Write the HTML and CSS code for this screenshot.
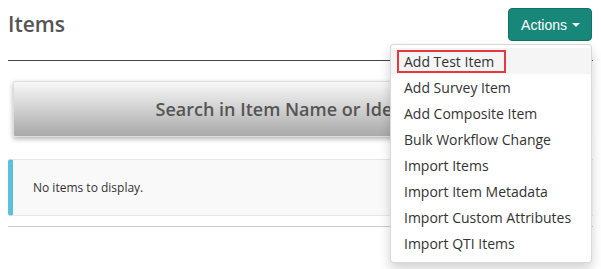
FILE: index.html
```html
<!DOCTYPE html>
<html lang="en">
<head>
    <meta charset="UTF-8">
    <title>Items</title>
    <link rel="stylesheet" href="styles.css">
</head>
<body>
    <div class="page">
        <div class="page-header">
            <h1>Items</h1>
            <div class="actions">
                <button class="actions-btn">Actions <span class="caret"></span></button>
                <ul class="dropdown">
                    <li class="active"><a href="#"><span class="marked">Add Test Item</span></a></li>
                    <li><a href="#">Add Survey Item</a></li>
                    <li><a href="#">Add Composite Item</a></li>
                    <li><a href="#">Bulk Workflow Change</a></li>
                    <li><a href="#">Import Items</a></li>
                    <li><a href="#">Import Item Metadata</a></li>
                    <li><a href="#">Import Custom Attributes</a></li>
                    <li><a href="#">Import QTI Items</a></li>
                </ul>
            </div>
        </div>
        <hr class="rule">
        <button class="search-btn">Search in Item Name or Identifier</button>
        <div class="info">No items to display.</div>
        <div class="footer-line"></div>
    </div>
</body>
</html>
```

FILE: styles.css
```css
html, body {
    height: 100%;
}
body {
    margin: 0;
    font-family: 'Open Sans', sans-serif;
    background: #fff;
    color: #333;
}
.page {
    min-height: 269px;
    padding: 8px 8px 0 8px;
    box-sizing: border-box;
}
.page-header {
    display: flex;
    justify-content: space-between;
    align-items: flex-start;
    margin-bottom: 19px;
}
h1 {
    margin: 0;
    font-size: 21px;
    font-weight: 600;
    line-height: 33px;
    color: #555;
}
.actions {
    position: relative;
    margin-right: 1px;
}
.actions-btn {
    display: flex;
    align-items: center;
    height: 33px;
    padding: 0 11px 0 12px;
    background: #17877a;
    border: 1px solid #137266;
    border-radius: 4px;
    color: #fff;
    font-family: 'Liberation Sans', Arial, sans-serif;
    font-size: 14px;
}
.caret {
    display: inline-block;
    width: 0;
    height: 0;
    margin-left: 5px;
    border-top: 4px solid #fff;
    border-left: 4px solid transparent;
    border-right: 4px solid transparent;
}
.dropdown {
    position: absolute;
    top: 36px;
    right: 0;
    width: 200px;
    margin: 0;
    padding: 3px 0 6px;
    list-style: none;
    background: #fff;
    border: 1px solid rgba(0, 0, 0, 0.15);
    border-radius: 4px;
    box-shadow: 0 6px 12px rgba(0, 0, 0, 0.175);
    z-index: 10;
}
.dropdown a {
    display: flex;
    align-items: center;
    height: 26px;
    padding: 0 13px;
    font-size: 14px;
    color: #333;
    text-decoration: none;
    white-space: nowrap;
}
.dropdown .active a {
    background: #f5f5f5;
}
.marked {
    margin-left: -7px;
    padding: 1px 10px 1px 5px;
    line-height: 17px;
    border: 2px solid #e8373d;
}
.rule {
    margin: 0;
    border: 0;
    border-top: 1px solid #444;
}
.search-btn {
    display: block;
    width: calc(100% - 10px);
    height: 56px;
    margin: 20px 5px 22px;
    background: linear-gradient(#f8f8f8, #a9a9a9);
    border: 1px solid #ddd;
    border-radius: 2px;
    box-shadow: 0 2px 5px rgba(0, 0, 0, 0.3);
    font-family: 'Open Sans', sans-serif;
    font-size: 18px;
    font-weight: 600;
    color: #555;
}
.info {
    display: flex;
    align-items: center;
    height: 55px;
    padding-left: 20px;
    background: #f9f9f9;
    border-top: 1px solid #e6e6e6;
    border-bottom: 1px solid #e6e6e6;
    border-left: 5px solid #5bc0de;
    border-radius: 3px 0 0 3px;
    font-size: 12px;
    color: #333;
}
.footer-line {
    margin-top: 10px;
    border-top: 1px solid #ccc;
}
```
